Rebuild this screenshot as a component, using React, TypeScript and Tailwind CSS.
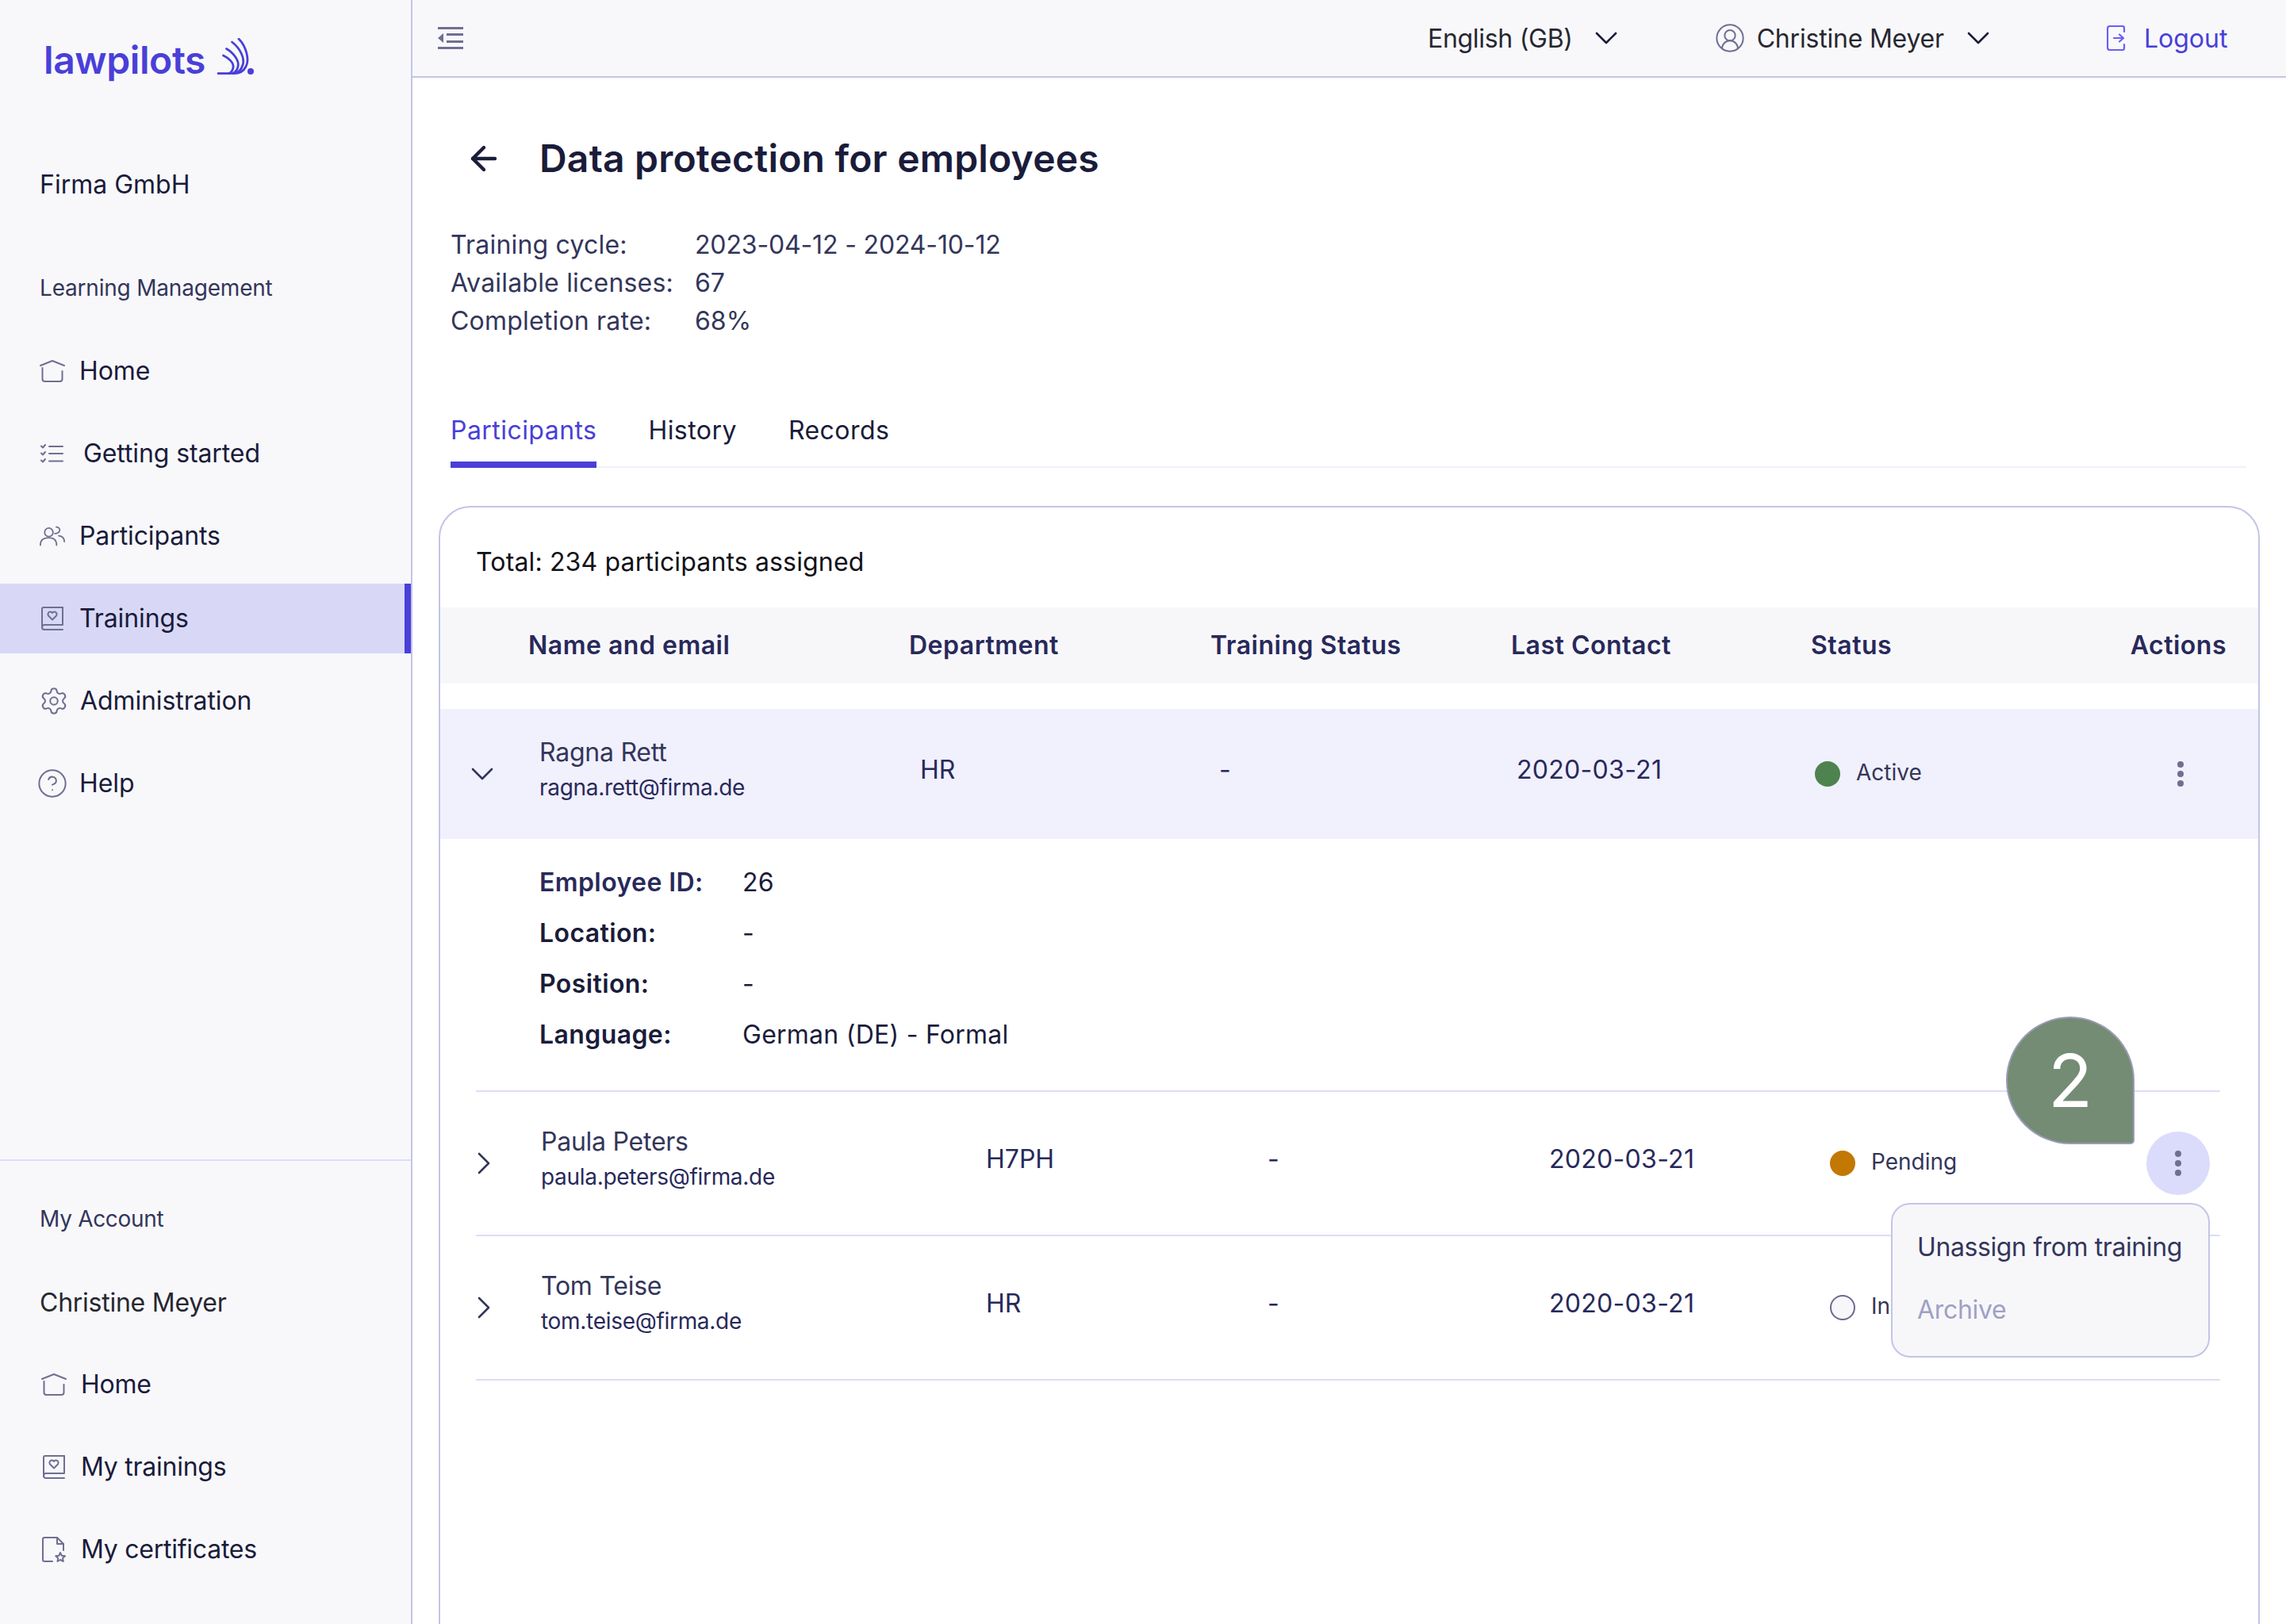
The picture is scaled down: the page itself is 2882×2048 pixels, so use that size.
import { ArrowLeft, CircleHelp, CircleUserRound, Settings } from "lucide-react";
import type { ReactNode } from "react";

const stroke = "#6f6f92";

function LogoMark() {
  return (
    <svg width="48" height="48" viewBox="0 0 48 48" fill="none" stroke="#4a3fd8" strokeWidth="2.8" strokeLinecap="round">
      <path d="M28 1C37 10 42 27 37 36C34 42 30 44.6 22 44.6" />
      <path d="M19.5 5C30 13 36 26 33 34C31 40 28 43 24 44" />
      <path d="M12.5 13.5C22 19 29 29 27 36C26 40 24 43 21 44" />
      <path d="M8.5 22C15 25 22 31 21 37C20.5 40 19 43 16 44.5" />
      <path d="M1 44.6H24" strokeLinecap="butt" />
      <circle cx="43" cy="42" r="4" fill="#4a3fd8" stroke="none" />
    </svg>
  );
}

function HomeIcon() {
  return (
    <svg width="32" height="28" viewBox="0 0 32 28" fill="none" stroke={stroke} strokeWidth="2" strokeLinecap="round" strokeLinejoin="round">
      <path d="M1 7L16 1L31 7" />
      <path d="M3.5 10V24C3.5 26 4.5 27 6.5 27H25.5C27.5 27 28.5 26 28.5 24V14" />
    </svg>
  );
}

function ChecklistIcon() {
  return (
    <svg width="32" height="24" viewBox="0 0 32 24" fill="none" stroke={stroke} strokeWidth="2" strokeLinecap="round" strokeLinejoin="round">
      <path d="M2 2.5L4 4.5L7 1" />
      <path d="M2 11.5L4 13.5L7 10" />
      <path d="M2 20.5L4 22.5L7 19" />
      <path d="M12 3H29M12 12H29M12 21.5H29" />
    </svg>
  );
}

function UsersIcon() {
  return (
    <svg width="36" height="28" viewBox="0 0 36 28" fill="none" stroke={stroke} strokeWidth="2" strokeLinecap="round" strokeLinejoin="round">
      <circle cx="13" cy="8.7" r="6" />
      <path d="M21.5 10.5C25.5 10.5 28.5 8 28.5 5.5C28.5 3 26 1 23.5 1.3" />
      <path d="M1 27C1 19.5 6 16.5 13 16.5C20 16.5 24 20 24 27" />
      <path d="M27 13.5C31.5 14 35 17 35 22" />
    </svg>
  );
}

function BookHeartIcon() {
  return (
    <svg width="28" height="30" viewBox="0 0 28 30" fill="none" stroke={stroke} strokeWidth="2" strokeLinecap="round" strokeLinejoin="round">
      <path d="M27 1H3C2 1 1 2 1 3V26C1 28 2 29 4 29H27" />
      <path d="M27 1V23H4C2 23 1 24 1 26" />
      <path d="M14 16.5L9 11.5C7.5 9.5 9 6.5 11.5 6.5C12.6 6.5 13.5 7.2 14 8C14.5 7.2 15.4 6.5 16.5 6.5C19 6.5 20.5 9.5 19 11.5Z" />
    </svg>
  );
}

function CertificateIcon() {
  return (
    <svg width="30" height="32" viewBox="0 0 30 32" fill="none" stroke={stroke} strokeWidth="2" strokeLinecap="round" strokeLinejoin="round">
      <path d="M13 31H3C2 31 1 30 1 29V3C1 2 2 1 3 1H19L27 9V17" />
      <path d="M19 1V9H27" />
      <path d="M23 20L24.8 23.8L29 24.3L26 27L26.8 31L23 29L19.5 31L20.2 27L17.2 24.3L21.3 23.8Z" />
    </svg>
  );
}

function Chevron({ dir = "down", color = "#1a1c3a" }: { dir?: "down" | "right"; color?: string }) {
  if (dir === "right") {
    return (
      <svg width="16" height="28" viewBox="0 0 16 28" fill="none" stroke={color} strokeWidth="2.6" strokeLinecap="round" strokeLinejoin="round">
        <path d="M2 2L14 14L2 26" />
      </svg>
    );
  }
  return (
    <svg width="28" height="16" viewBox="0 0 28 16" fill="none" stroke={color} strokeWidth="2.6" strokeLinecap="round" strokeLinejoin="round">
      <path d="M2 2L14 14L26 2" />
    </svg>
  );
}

function LogoutIcon() {
  return (
    <svg width="24" height="32" viewBox="0 0 24 32" fill="none" stroke="#6a5ef5" strokeWidth="2.2" strokeLinecap="round" strokeLinejoin="round">
      <path d="M22 8V3C22 2 21 1 20 1H4C2 1 1 2 1 4V28C1 30 2 31 4 31H20C21 31 22 30 22 29V24" />
      <path d="M9 16H20M16 11.5L21 16L16 20.5" />
    </svg>
  );
}

function MenuCollapseIcon() {
  return (
    <svg width="32" height="28" viewBox="0 0 32 28" fill={stroke}>
      <rect x="0" y="0" width="32" height="3" />
      <rect x="11" y="8" width="21" height="3" />
      <rect x="11" y="17" width="21" height="3" />
      <rect x="0" y="25" width="32" height="3" />
      <path d="M7 8V20L0 14Z" />
    </svg>
  );
}

function Kebab() {
  return (
    <div className="flex flex-col gap-1">
      <span className="h-2 w-2 rounded-full bg-[#6f6f92]" />
      <span className="h-2 w-2 rounded-full bg-[#6f6f92]" />
      <span className="h-2 w-2 rounded-full bg-[#6f6f92]" />
    </div>
  );
}

function NavItem({
  icon,
  label,
  gap,
  active,
}: {
  icon: ReactNode;
  label: string;
  gap: string;
  active?: boolean;
}) {
  return (
    <div className={`flex h-[88px] items-center ${active ? "border-r-8 border-[#4a3fd8] bg-[#d8d8f6]" : ""}`}>
      <div className="ml-[50px] flex w-[32px] justify-center">{icon}</div>
      <span className={`text-[32px] tracking-[-0.1px] text-[#1a1c3a] ${gap}`}>{label}</span>
    </div>
  );
}

function Sidebar() {
  return (
    <aside className="flex h-full w-[520px] shrink-0 flex-col border-r-2 border-[#c3c5e6] bg-[#f8f8fb]">
      <div className="flex h-[108px] items-end pl-[55px]">
        <span className="text-[48px] leading-[64px] font-semibold tracking-[-0.4px] text-[#4a3fd8]">lawpilots</span>
        <div className="mb-[12px] ml-[14px]">
          <LogoMark />
        </div>
      </div>
      <div className="mt-[101px] pl-[50px] text-[32px] leading-[48px] text-[#1a1c3a]">Firma GmbH</div>
      <div className="mt-[86px] pl-[50px] text-[28px] leading-[40px] tracking-[-0.2px] text-[#33365a]">Learning Management</div>
      <nav className="mt-[41px] flex flex-col gap-[16px]">
        <NavItem icon={<HomeIcon />} label="Home" gap="ml-[18px]" />
        <NavItem icon={<ChecklistIcon />} label="Getting started" gap="ml-[23px]" />
        <NavItem icon={<UsersIcon />} label="Participants" gap="ml-[18px]" />
        <NavItem icon={<BookHeartIcon />} label="Trainings" gap="ml-[18px]" active />
        <NavItem
          icon={<Settings size={38} color={stroke} strokeWidth={1.3} className="ml-1 shrink-0" />}
          label="Administration"
          gap="ml-[19px]"
        />
        <NavItem
          icon={<CircleHelp size={40} color={stroke} strokeWidth={1.2} className="shrink-0" />}
          label="Help"
          gap="ml-[18px]"
        />
      </nav>
      <div className="mt-auto h-[586px] border-t-2 border-[#dcdcfb]">
        <div className="mt-[53px] pl-[50px] text-[28px] leading-[40px] tracking-[-0.3px] text-[#33365a]">My Account</div>
        <div className="mt-[62px] pl-[50px] text-[32px] leading-[48px] tracking-[-0.25px] text-[#27272f]">Christine Meyer</div>
        <div className="mt-[35px] flex flex-col gap-[16px]">
          {[
            { icon: <HomeIcon />, label: "Home" },
            { icon: <BookHeartIcon />, label: "My trainings" },
            { icon: <CertificateIcon />, label: "My certificates" },
          ].map((item) => (
            <div key={item.label} className="flex h-[88px] items-center">
              <div className="ml-[52px] flex w-[32px] justify-center">{item.icon}</div>
              <span className="ml-[18px] text-[32px] tracking-[-0.25px] text-[#1a1c3a]">{item.label}</span>
            </div>
          ))}
        </div>
      </div>
    </aside>
  );
}

function Header() {
  return (
    <header className="flex h-[98px] shrink-0 items-center border-b-2 border-[#c3c5e6] bg-[#f8f8fb] pl-[32px] text-[32px] text-[#27272f]">
      <MenuCollapseIcon />
      <span className="ml-[1216px] pt-[2px] tracking-[-0.3px]">English (GB)</span>
      <div className="ml-[28px]">
        <Chevron />
      </div>
      <div className="ml-[122px]">
        <CircleUserRound size={40} color={stroke} strokeWidth={1.2} />
      </div>
      <span className="ml-[14px] pt-[2px] tracking-[-0.2px]">Christine Meyer</span>
      <div className="ml-[29px]">
        <Chevron />
      </div>
      <div className="ml-[148px]">
        <LogoutIcon />
      </div>
      <span className="ml-[23px] pt-[2px] text-[#4a3fd8]">Logout</span>
    </header>
  );
}

function Status({ dot, label }: { dot: string; label: string }) {
  return (
    <div className="flex items-center">
      <span className={`h-8 w-8 shrink-0 rounded-full ${dot}`} />
      <span className="ml-[20px] pb-[4px] text-[28px] text-[#33365a]">{label}</span>
    </div>
  );
}

function Person({ name, email }: { name: string; email: string }) {
  return (
    <div className="flex flex-col pb-[10px]">
      <span className="text-[32px] leading-[44px] tracking-[-0.25px] text-[#33365a]">{name}</span>
      <span className="text-[28px] leading-[44px] tracking-[-0.3px] text-[#28295a]">{email}</span>
    </div>
  );
}

function ClosedRow({
  name,
  email,
  dept,
  status,
  dot,
  menu,
}: {
  name: string;
  email: string;
  dept: string;
  status: string;
  dot: string;
  menu?: boolean;
}) {
  return (
    <div className="flex h-[182px] items-center border-t-2 border-[#dcdcfb]">
      <div className="w-[82px] pl-[2px]">
        <Chevron dir="right" color="#33365a" />
      </div>
      <div className="w-[561px]">
        <Person name={name} email={email} />
      </div>
      <div className="w-[355px] pb-[10px] text-[32px] text-[#28295a]">{dept}</div>
      <div className="w-[355px] pb-[10px] text-[32px] text-[#28295a]">-</div>
      <div className="w-[354px] pb-[10px] text-[32px] tracking-[0.3px] text-[#28295a]">2020-03-21</div>
      <div className="flex-1">
        <Status dot={dot} label={status} />
      </div>
      {menu && (
        <div className="relative mr-[13px] flex h-[80px] w-[80px] items-center justify-center rounded-full bg-[#dbdbfb]">
          <Kebab />
          <div className="absolute top-[90px] right-0 z-10 flex h-[195px] w-[402px] flex-col rounded-[24px] border-2 border-[#c3c5e6] bg-[#f7f7fa] pt-[26px] pl-[31px] text-[32px]">
            <span className="leading-[56px] tracking-[-0.4px] text-[#33365a]">Unassign from training</span>
            <span className="mt-[23px] leading-[56px] tracking-[-0.3px] text-[#a0a0c4]">Archive</span>
          </div>
          <div className="absolute top-[-145px] right-[95px] z-10 flex h-[161px] w-[162px] items-center justify-center rounded-[50%_50%_3%_50%] border-2 border-[#9a9ab8] bg-[#748c73] text-[92px] text-white">
            2
          </div>
        </div>
      )}
    </div>
  );
}

const details = [
  { label: "Employee ID:", value: "26", color: "text-[#28295a]" },
  { label: "Location:", value: "-", color: "text-[#1a1c3a]" },
  { label: "Position:", value: "-", color: "text-[#1a1c3a]" },
  { label: "Language:", value: "German (DE) - Formal", color: "text-[#1a1c3a]" },
];

function ParticipantsCard() {
  return (
    <section className="mt-[48px] ml-[33px] h-[1600px] w-[2296px] shrink-0 rounded-[40px] border-2 border-[#c3c5e6] bg-white">
      <div className="flex h-[126px] items-center pt-[11px] pl-[45px] text-[32px] tracking-[0.15px] text-[#111118]">
        Total: 234 participants assigned
      </div>
      <div className="flex h-[96px] items-center bg-[#f7f7fa] pl-[111px] text-[32px] font-semibold tracking-[0.5px] text-[#28295a]">
        <span className="w-[480px]">Name and email</span>
        <span className="w-[380px]">Department</span>
        <span className="w-[379px]">Training Status</span>
        <span className="w-[378px]">Last Contact</span>
        <span>Status</span>
        <span className="mr-[40px] flex-1 text-right">Actions</span>
      </div>
      <div className="mt-[32px] flex h-[164px] items-center bg-[#f1f0fd]">
        <div className="w-[125px] pl-[39px]">
          <Chevron color="#33365a" />
        </div>
        <div className="w-[480px]">
          <Person name="Ragna Rett" email="ragna.rett@firma.de" />
        </div>
        <div className="w-[377px] pb-[10px] text-[32px] text-[#28295a]">HR</div>
        <div className="w-[375px] pb-[10px] text-[32px] text-[#28295a]">-</div>
        <div className="w-[376px] pb-[10px] text-[32px] tracking-[0.3px] text-[#28295a]">2020-03-21</div>
        <div className="flex-1">
          <Status dot="bg-[#4e824e]" label="Active" />
        </div>
        <div className="mr-[58px] flex w-[80px] justify-center">
          <Kebab />
        </div>
      </div>
      <div className="pt-[23px] pl-[125px] text-[32px] leading-[64px]">
        {details.map((row) => (
          <div key={row.label} className="flex">
            <span className={`w-[256px] font-semibold tracking-[0.4px] ${row.color}`}>{row.label}</span>
            <span className="tracking-[0.25px] text-[#1a1c3a]">{row.value}</span>
          </div>
        ))}
      </div>
      <div className="mt-[38px] ml-[45px] w-[2199px]">
        <ClosedRow name="Paula Peters" email="paula.peters@firma.de" dept="H7PH" status="Pending" dot="bg-[#c27803]" menu />
        <ClosedRow name="Tom Teise" email="tom.teise@firma.de" dept="HR" status="Inactive" dot="border-2 border-[#6a6a8e] bg-[#f7f7fa]" />
        <div className="border-t-2 border-[#dcdcfb]" />
      </div>
    </section>
  );
}

export default function App() {
  return (
    <div className="flex h-[2048px] w-[2882px] overflow-hidden bg-white font-['Inter',sans-serif]">
      <Sidebar />
      <main className="flex min-w-0 flex-1 flex-col overflow-hidden">
        <Header />
        <div className="mt-[66px] flex h-[72px] shrink-0 items-center pl-[66px] text-[#1a1c3a]">
          <ArrowLeft size={48} strokeWidth={2.2} />
          <h1 className="ml-[46px] text-[48px] font-semibold tracking-[0.2px]">Data protection for employees</h1>
        </div>
        <div className="mt-[49px] ml-[48px] grid shrink-0 grid-cols-[308px_1fr] text-[32px] leading-[48px] text-[#33365a]">
          <span className="tracking-[0.2px]">Training cycle:</span>
          <span className="tracking-[-0.15px]">2023-04-12 - 2024-10-12</span>
          <span className="tracking-[0.2px]">Available licenses:</span>
          <span>67</span>
          <span className="tracking-[0.2px]">Completion rate:</span>
          <span>68%</span>
        </div>
        <div className="mt-[90px] ml-[48px] flex w-[2264px] shrink-0 gap-[65px] border-b-2 border-[#f1f0fd] text-[32px] leading-[48px] tracking-[0.45px] text-[#1a1c3a]">
          <span className="-mb-[2px] border-b-8 border-[#4a3fd8] pb-[15px] text-[#4a3fd8]">Participants</span>
          <span className="pb-[15px]">History</span>
          <span className="pb-[15px]">Records</span>
        </div>
        <ParticipantsCard />
      </main>
    </div>
  );
}
